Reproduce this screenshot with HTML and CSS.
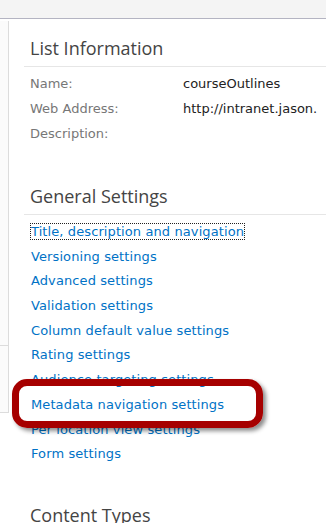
FILE: index.html
```html
<!DOCTYPE html>
<html lang="en">
<head>
    <meta charset="UTF-8">
    <title>List Settings</title>
    <link rel="stylesheet" href="styles.css">
</head>
<body>
    <div class="topbar"></div>
    <div class="layout">
        <div class="leftnav">
            <div class="nav-block first"></div>
            <div class="nav-block second"></div>
        </div>
        <div class="main">
            <div class="section">
                <h2 class="heading">List Information</h2>
                <div class="info-row"><span class="label">Name:</span><span class="value">courseOutlines</span></div>
                <div class="info-row"><span class="label">Web Address:</span><span class="value">http://intranet.jason.</span></div>
                <div class="info-row"><span class="label">Description:</span><span class="value"></span></div>
            </div>
            <div class="section settings">
                <h2 class="heading">General Settings</h2>
                <ul class="links">
                    <li><a href="#" class="focused">Title, description and navigation</a></li>
                    <li><a href="#">Versioning settings</a></li>
                    <li><a href="#">Advanced settings</a></li>
                    <li><a href="#">Validation settings</a></li>
                    <li><a href="#">Column default value settings</a></li>
                    <li><a href="#">Rating settings</a></li>
                    <li><a href="#">Audience targeting settings</a></li>
                    <li><a href="#">Metadata navigation settings</a></li>
                    <li><a href="#">Per location view settings</a></li>
                    <li><a href="#">Form settings</a></li>
                </ul>
            </div>
            <div class="section">
                <h2 class="heading">Content Types</h2>
            </div>
        </div>
    </div>
    <div class="callout"></div>
</body>
</html>
```

FILE: styles.css
```css
body {
    margin: 0;
    background-color: white;
    font-family: "DejaVu Sans", Verdana, sans-serif;
    font-size: 13px;
    overflow: hidden;
}
.topbar {
    height: 18px;
    background-color: #f4f4f4;
    border-bottom: 1px solid #b4b4c2;
}
.layout {
    display: flex;
    padding-top: 2px;
}
.leftnav {
    width: 9px;
    flex-shrink: 0;
}
.nav-block {
    border-right: 1px solid #dcdcdc;
    border-bottom: 1px solid #dcdcdc;
    background-color: #fbfbfb;
}
.nav-block.first {
    height: 324px;
}
.nav-block.second {
    height: 66px;
}
.main {
    flex: 1;
    padding-left: 15px;
    white-space: nowrap;
    overflow: hidden;
}
.section {
    margin-bottom: 38px;
}
.section.settings {
    margin-bottom: 36px;
}
.heading {
    font-family: "Open Sans", "Segoe UI", sans-serif;
    font-weight: normal;
    font-size: 18px;
    line-height: 24px;
    color: #444444;
    margin: 15px 0 4px 0;
    padding: 0 0 6px 6px;
    border-bottom: 1px solid #e6e6e6;
}
.info-row {
    display: flex;
    height: 25px;
    align-items: center;
    padding-left: 6px;
}
.label {
    width: 153px;
    color: #777777;
}
.value {
    color: #222222;
}
.links {
    list-style: none;
    margin: 0;
    padding: 1px 0 0 7px;
}
.links li {
    height: 24.7px;
    line-height: 24.7px;
    letter-spacing: 0.1px;
}
.links a {
    color: #0072c6;
    text-decoration: none;
}
.links a.focused {
    outline: 1px dotted #222;
}
.callout {
    position: absolute;
    left: 12px;
    top: 379px;
    width: 237px;
    height: 35px;
    border: 7px solid #a60000;
    border-radius: 15px;
    box-shadow: 3px 3px 4px rgba(0, 0, 0, 0.45);
}
```
